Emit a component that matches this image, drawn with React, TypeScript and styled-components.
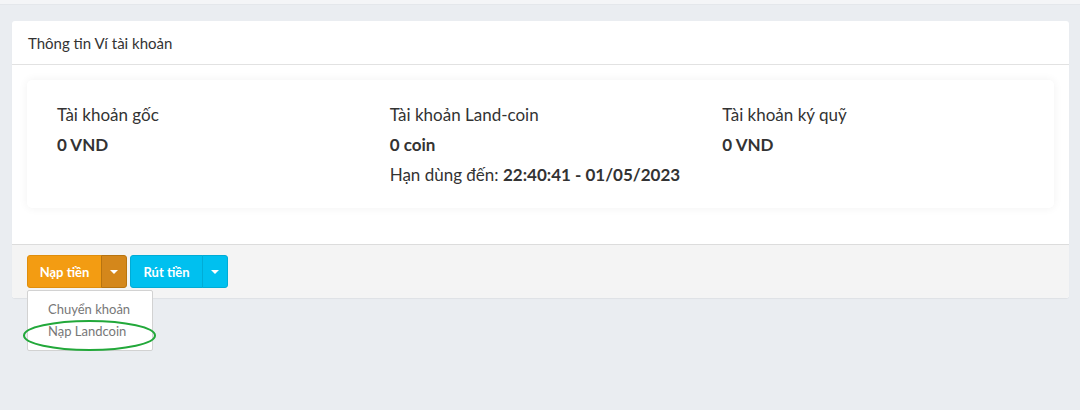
import React from "react";
import styled, { createGlobalStyle } from "styled-components";

const Global = createGlobalStyle`
  html, body { margin: 0; padding: 0; background: #ffffff; }
  body { font-family: "Source Sans Pro", Lato, "Noto Sans", sans-serif; color: #333; }
  * { box-sizing: border-box; }
`;

const Page = styled.div`
  width: 1080px;
  height: 410px;
  background: #eaedf1;
  position: relative;
`;

const TopStrip = styled.div`
  height: 5px;
  background: #f4f5f7;
  border-bottom: 1px solid #e4e7eb;
`;

const Content = styled.div`
  padding: 16px 11px 0 12px;
`;

const Card = styled.section`
  background: #fff;
  border-radius: 3px;
  box-shadow: 0 1px 1px rgba(0, 0, 0, 0.05);
`;

const CardHeader = styled.header`
  height: 44px;
  padding: 0 16px;
  display: flex;
  align-items: center;
  font-size: 15px;
  color: #333;
  border-bottom: 1px solid #e2e2e2;
`;

const CardBody = styled.div`
  padding: 15px 15px 36px 15px;
`;

const InfoBox = styled.div`
  display: grid;
  grid-template-columns: repeat(3, 1fr);
  padding: 20px 14px 18px 15px;
  border-radius: 5px;
  background: #fff;
  box-shadow: 0 0 10px rgba(0, 0, 0, 0.06);
`;

const Col = styled.div`
  padding-left: 15px;
  font-size: 17px;
  line-height: 30px;
  color: #333;
`;

const Line = styled.div<{ $bold?: boolean }>`
  font-weight: ${(p) => (p.$bold ? 700 : 400)};
`;

const Strong = styled.strong`
  font-weight: 700;
`;

const CardFooter = styled.footer`
  position: relative;
  display: flex;
  gap: 3px;
  padding: 10px 15px 10px 15px;
  background: #f4f4f4;
  border-top: 1px solid #dcdcdc;
  border-radius: 0 0 3px 3px;
`;

const BtnGroup = styled.div`
  display: flex;
  position: relative;
`;

const Btn = styled.button<{ $color: string; $border: string; $w: number }>`
  width: ${(p) => p.$w}px;
  height: 33px;
  padding: 0;
  border: 1px solid ${(p) => p.$border};
  background: ${(p) => p.$color};
  color: #fff;
  font-family: inherit;
  font-size: 13px;
  font-weight: 700;
  border-radius: 3px 0 0 3px;
  cursor: pointer;
`;

const CaretBtn = styled.button<{ $color: string; $border: string }>`
  width: 26px;
  height: 33px;
  margin-left: -1px;
  border: 1px solid ${(p) => p.$border};
  background: ${(p) => p.$color};
  border-radius: 0 3px 3px 0;
  display: flex;
  align-items: center;
  justify-content: center;
  padding: 0;
  cursor: pointer;
`;

const Caret = styled.span`
  width: 0;
  height: 0;
  border-left: 4px solid transparent;
  border-right: 4px solid transparent;
  border-top: 4px solid #fff;
`;

const Menu = styled.ul`
  position: absolute;
  top: 35px;
  left: 0;
  width: 126px;
  margin: 0;
  padding: 7px 0 8px;
  list-style: none;
  background: #fff;
  border: 1px solid #d2d2d2;
  border-radius: 2px;
  z-index: 2;
`;

const MenuItem = styled.li`
  padding: 0 20px;
  height: 22px;
  line-height: 22px;
  font-size: 13px;
  color: #777;
  white-space: nowrap;
`;

const Highlight = styled.svg`
  position: absolute;
  left: -5px;
  top: 64px;
  z-index: 3;
  pointer-events: none;
`;

export default function App() {
  return (
    <>
      <Global />
      <Page>
        <TopStrip />
        <Content>
          <Card>
            <CardHeader>Thông tin Ví tài khoản</CardHeader>
            <CardBody>
              <InfoBox>
                <Col>
                  <Line>Tài khoản gốc</Line>
                  <Line $bold>0 VND</Line>
                </Col>
                <Col>
                  <Line>Tài khoản Land-coin</Line>
                  <Line $bold>0 coin</Line>
                  <Line>
                    Hạn dùng đến: <Strong>22:40:41 - 01/05/2023</Strong>
                  </Line>
                </Col>
                <Col>
                  <Line>Tài khoản ký quỹ</Line>
                  <Line $bold>0 VND</Line>
                </Col>
              </InfoBox>
            </CardBody>
            <CardFooter>
              <BtnGroup>
                <Btn $w={75} $color="#f39c12" $border="#e08e0b">Nạp tiền</Btn>
                <CaretBtn $color="#d4871b" $border="#b8740f">
                  <Caret />
                </CaretBtn>
                <Menu>
                  <MenuItem>Chuyển khoản</MenuItem>
                  <MenuItem>Nạp Landcoin</MenuItem>
                </Menu>
                <Highlight width="136" height="34" viewBox="0 0 136 34">
                  <ellipse cx="67.5" cy="16.5" rx="65.5" ry="14.5" fill="none" stroke="#22a83a" strokeWidth="2" />
                </Highlight>
              </BtnGroup>
              <BtnGroup>
                <Btn $w={73} $color="#00c0ef" $border="#00acd6">Rút tiền</Btn>
                <CaretBtn $color="#00c0ef" $border="#00acd6">
                  <Caret />
                </CaretBtn>
              </BtnGroup>
            </CardFooter>
          </Card>
        </Content>
      </Page>
    </>
  );
}
